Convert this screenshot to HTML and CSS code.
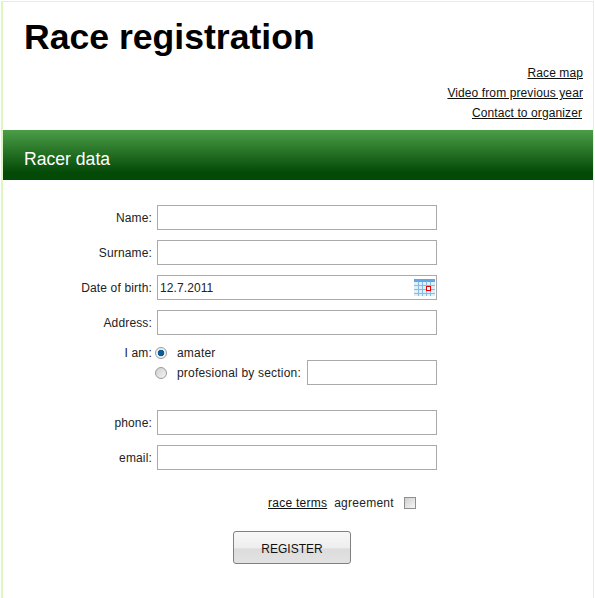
FILE: index.html
```html
<!DOCTYPE html>
<html lang="en">
<head>
  <meta charset="UTF-8">
  <title>Race registration</title>
  <link rel="stylesheet" href="styles.css">
</head>
<body>
  <div class="page">
    <h1>Race registration</h1>
    <ul class="links">
      <li><a href="#">Race map</a></li>
      <li><a href="#">Video from previous year</a></li>
      <li class="contact"><a href="#">Contact to organizer</a></li>
    </ul>
    <h2 class="band">Racer data</h2>
    <form class="form">
      <div class="row">
        <label>Name:</label>
        <input class="field" type="text">
      </div>
      <div class="row">
        <label>Surname:</label>
        <input class="field" type="text">
      </div>
      <div class="row">
        <label>Date of birth:</label>
        <div class="date">
          <input class="field" type="text" value="12.7.2011">
          <svg class="cal" width="21" height="17" viewBox="0 0 21 17">
            <rect x="0" y="0" width="21" height="17" fill="#dceffa"/>
            <rect x="0" y="0" width="21" height="3" fill="#62a6e6"/>
            <path d="M0 6.5H21M0 10.5H21M0 14.5H21M4.5 3V17M8.5 3V17M12.5 3V17M16.5 3V17" stroke="#86bcdc" fill="none"/>
            <rect x="12.5" y="7.5" width="4" height="4" fill="#fff" stroke="#e00000"/>
          </svg>
        </div>
      </div>
      <div class="row">
        <label>Address:</label>
        <input class="field" type="text">
      </div>
      <div class="choice">
        <div class="choice-line">
          <label>I am:</label>
          <span class="radio on"></span>
          <span class="option">amater</span>
        </div>
        <div class="choice-line">
          <label></label>
          <span class="radio"></span>
          <span class="option">profesional by section:</span>
          <input class="field small" type="text">
        </div>
      </div>
      <div class="row">
        <label>phone:</label>
        <input class="field" type="text">
      </div>
      <div class="row">
        <label>email:</label>
        <input class="field" type="text">
      </div>
      <div class="terms">
        <a href="#">race terms</a>
        <span>agreement</span>
        <span class="check"></span>
      </div>
      <button class="register" type="button">REGISTER</button>
    </form>
  </div>
</body>
</html>
```

FILE: styles.css
```css
html, body {
  margin: 0;
  background: #fff;
}
body {
  font-family: "Liberation Sans", Arial, sans-serif;
  font-size: 12px;
  letter-spacing: 0.1px;
  color: #222;
}
a {
  color: #111;
}
.page {
  box-sizing: border-box;
  width: 593px;
  height: 597px;
  margin: 1px 0 0 1px;
  border: solid #dcf8c0;
  border-width: 1px 1px 0 2px;
  overflow: hidden;
}
h1 {
  margin: 0;
  padding: 15px 0 0 21px;
  font-size: 35.6px;
  letter-spacing: 0;
  line-height: 41px;
  color: #000;
}
.links {
  list-style: none;
  margin: 0;
  padding: 5px 10px 0 0;
  text-align: right;
}
.links li {
  height: 20px;
  line-height: 20px;
}
.links .contact {
  padding-right: 1px;
}
.band {
  margin: 7px 0 0;
  height: 50px;
  padding-left: 21px;
  font-size: 17.6px;
  font-weight: normal;
  letter-spacing: 0;
  line-height: 58px;
  color: #fff;
  background: linear-gradient(#4b9d47, #3f8f3c 15%, #034a07 85%, #034a07);
}
.form {
  padding-top: 25px;
}
.row {
  display: flex;
  align-items: center;
  height: 25px;
  margin-bottom: 10px;
}
label {
  width: 149px;
  margin-right: 5px;
  text-align: right;
  letter-spacing: 0.15px;
  flex-shrink: 0;
}
.field {
  box-sizing: border-box;
  width: 280px;
  height: 25px;
  margin: 0;
  padding: 0 2px;
  border: 1px solid #aaa;
  border-radius: 0;
  outline: none;
  font: 12px "Liberation Sans", Arial, sans-serif;
  letter-spacing: 0.1px;
  color: #222;
  background: #fff;
}
.field.small {
  width: 130px;
  margin: -2px 0 0 auto;
}
.date {
  position: relative;
  display: flex;
}
.cal {
  position: absolute;
  top: 4px;
  right: 2px;
}
.choice {
  height: 57px;
  margin-bottom: 10px;
  margin-top: -2px;
}
.choice-line {
  display: flex;
  align-items: center;
  width: 434px;
  height: 20px;
}
.choice-line label {
  margin-right: 3px;
}
.radio {
  box-sizing: border-box;
  width: 12px;
  height: 12px;
  border-radius: 50%;
  border: 1px solid #9a9a9a;
  background: linear-gradient(135deg, #d0d0d0, #f4f4f4);
  flex-shrink: 0;
}
.radio.on {
  background: radial-gradient(circle, #0b5d94 0, #0b5d94 3px, #eef2f5 3.6px);
}
.option {
  margin-left: 10px;
  letter-spacing: 0.2px;
}
.terms {
  display: flex;
  align-items: center;
  height: 20px;
  margin: 23px 0 0 265px;
  letter-spacing: 0.25px;
}
.terms span:first-of-type {
  margin-left: 7px;
}
.check {
  box-sizing: border-box;
  width: 12px;
  height: 12px;
  margin-left: 10px;
  border: 1px solid #8f8f8f;
  background: linear-gradient(135deg, #cfcfcf, #f6f6f6);
}
.register {
  display: block;
  box-sizing: border-box;
  width: 118px;
  height: 33px;
  margin: 18px 0 0 230px;
  padding: 2px 0 0;
  border: 1px solid #808080;
  border-radius: 3px;
  font: 12px "Liberation Sans", Arial, sans-serif;
  color: #111;
  background: linear-gradient(#f8f8f8, #eeeeee 50%, #dcdcdc 55%, #e2e2e2);
}
```
